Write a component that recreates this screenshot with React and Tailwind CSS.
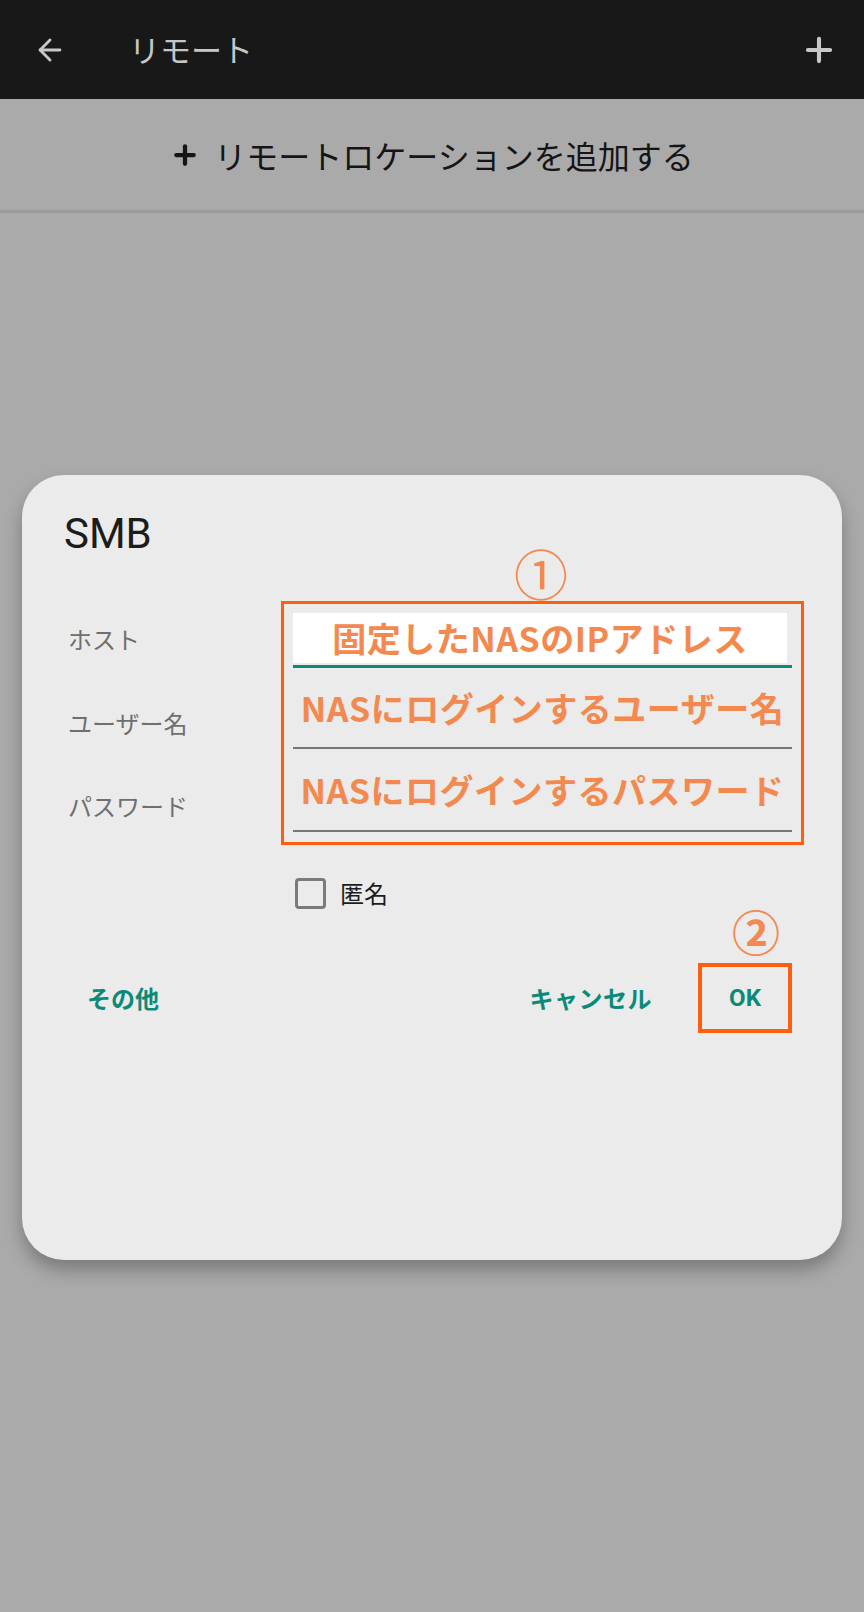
import React from 'react';
import { ArrowLeft, Plus } from 'lucide-react';

const jp = "font-['Noto_Sans_CJK_JP','Noto_Sans',sans-serif]";

const Label = ({ children, className = '' }) => (
  <div className={`h-[30px] leading-[30px] text-[24px] text-[#6f6f6f] ${className}`}>{children}</div>
);

const Note = ({ children }) => (
  <span className="text-[34px] leading-none font-bold text-[#f4894f] tracking-[0.5px] whitespace-nowrap">
    {children}
  </span>
);

const App = () => {
  return (
    <div className={`w-[864px] h-[1612px] bg-[#aaaaaa] flex flex-col ${jp}`}>
      {/* App bar */}
      <div className="h-[99px] bg-[#181818] flex items-center shrink-0">
        <ArrowLeft className="ml-[33px] text-[#c8c8c8]" size={34} strokeWidth={2} />
        <span className="ml-[62px] text-[31px] text-[#c6c6c6]">リモート</span>
        <div className="flex-1" />
        <Plus className="mr-[26px] text-[#c8c8c8]" size={38} strokeWidth={2.6} />
      </div>

      {/* Add remote location row */}
      <div className="h-[114px] border-b-[3px] border-[#9c9c9c] flex items-center justify-center shrink-0">
        <Plus className="text-[#151515] mr-[14px]" size={30} strokeWidth={3.4} />
        <span className="text-[32px] text-[#151515]">リモートロケーションを追加する</span>
      </div>

      {/* Dialog */}
      <div className="mt-[262px] mx-[22px] h-[785px] bg-[#ebebeb] rounded-[42px] shadow-[0_10px_18px_rgba(0,0,0,0.28)] flex flex-col">
        <div className="pl-[42px] pt-[33px] text-[42px] leading-[52px] text-[#1c1c1c] font-['Roboto',sans-serif]">SMB</div>

        {/* annotation ① */}
        <div className="pl-[492px] h-[45px] mt-[-10px] mb-[6px] text-[54px] leading-[45px] text-[#f4894f]">①</div>

        <div className="flex">
          <div className="w-[259px] pl-[46px] pt-[23px] flex flex-col">
            <Label>ホスト</Label>
            <Label className="mt-[54px]">ユーザー名</Label>
            <Label className="mt-[53px]">パスワード</Label>
          </div>

          <div className="w-[523px] h-[244px] border-[3px] border-[#ff5e0e] px-[9px] pt-[9px] flex flex-col">
            <div className="h-[50px] bg-white mr-[5px] flex items-center justify-center">
              <Note>固定したNASのIPアドレス</Note>
            </div>
            <div className="h-[3px] bg-[#0b8a78] mt-[2px]" />
            <div className="h-[79px] flex items-center justify-center">
              <Note>NASにログインするユーザー名</Note>
            </div>
            <div className="h-[2px] bg-[#777777]" />
            <div className="h-[81px] flex items-center justify-center">
              <Note>NASにログインするパスワード</Note>
            </div>
            <div className="h-[2px] bg-[#777777]" />
          </div>
        </div>

        {/* anonymous checkbox */}
        <div className="flex items-center ml-[273px] mt-[30px]">
          <div className="w-[31px] h-[31px] border-[3px] border-[#7a7a7a] rounded-[4px]" />
          <span className="ml-[14px] text-[24px] text-[#1c1c1c]">匿名</span>
        </div>

        {/* annotation ② */}
        <div className="flex justify-end mr-[62px] mt-[-4px] h-[46px]">
          <span className="text-[48px] leading-[46px] font-bold text-[#f4894f]">②</span>
        </div>

        {/* buttons */}
        <div className="flex items-center mt-[10px]">
          <span className="ml-[65px] text-[24px] font-bold text-[#0b8a78]">その他</span>
          <div className="flex-1" />
          <span className="text-[24px] font-bold text-[#0b8a78] tracking-[0.5px]">キャンセル</span>
          <div className="ml-[46px] mr-[50px] w-[94px] h-[70px] border-[4px] border-[#ff5e0e] flex items-center justify-center">
            <span className="text-[24px] font-bold text-[#0b8a78] font-['Roboto',sans-serif]">OK</span>
          </div>
        </div>
      </div>
    </div>
  );
};

export default App;
